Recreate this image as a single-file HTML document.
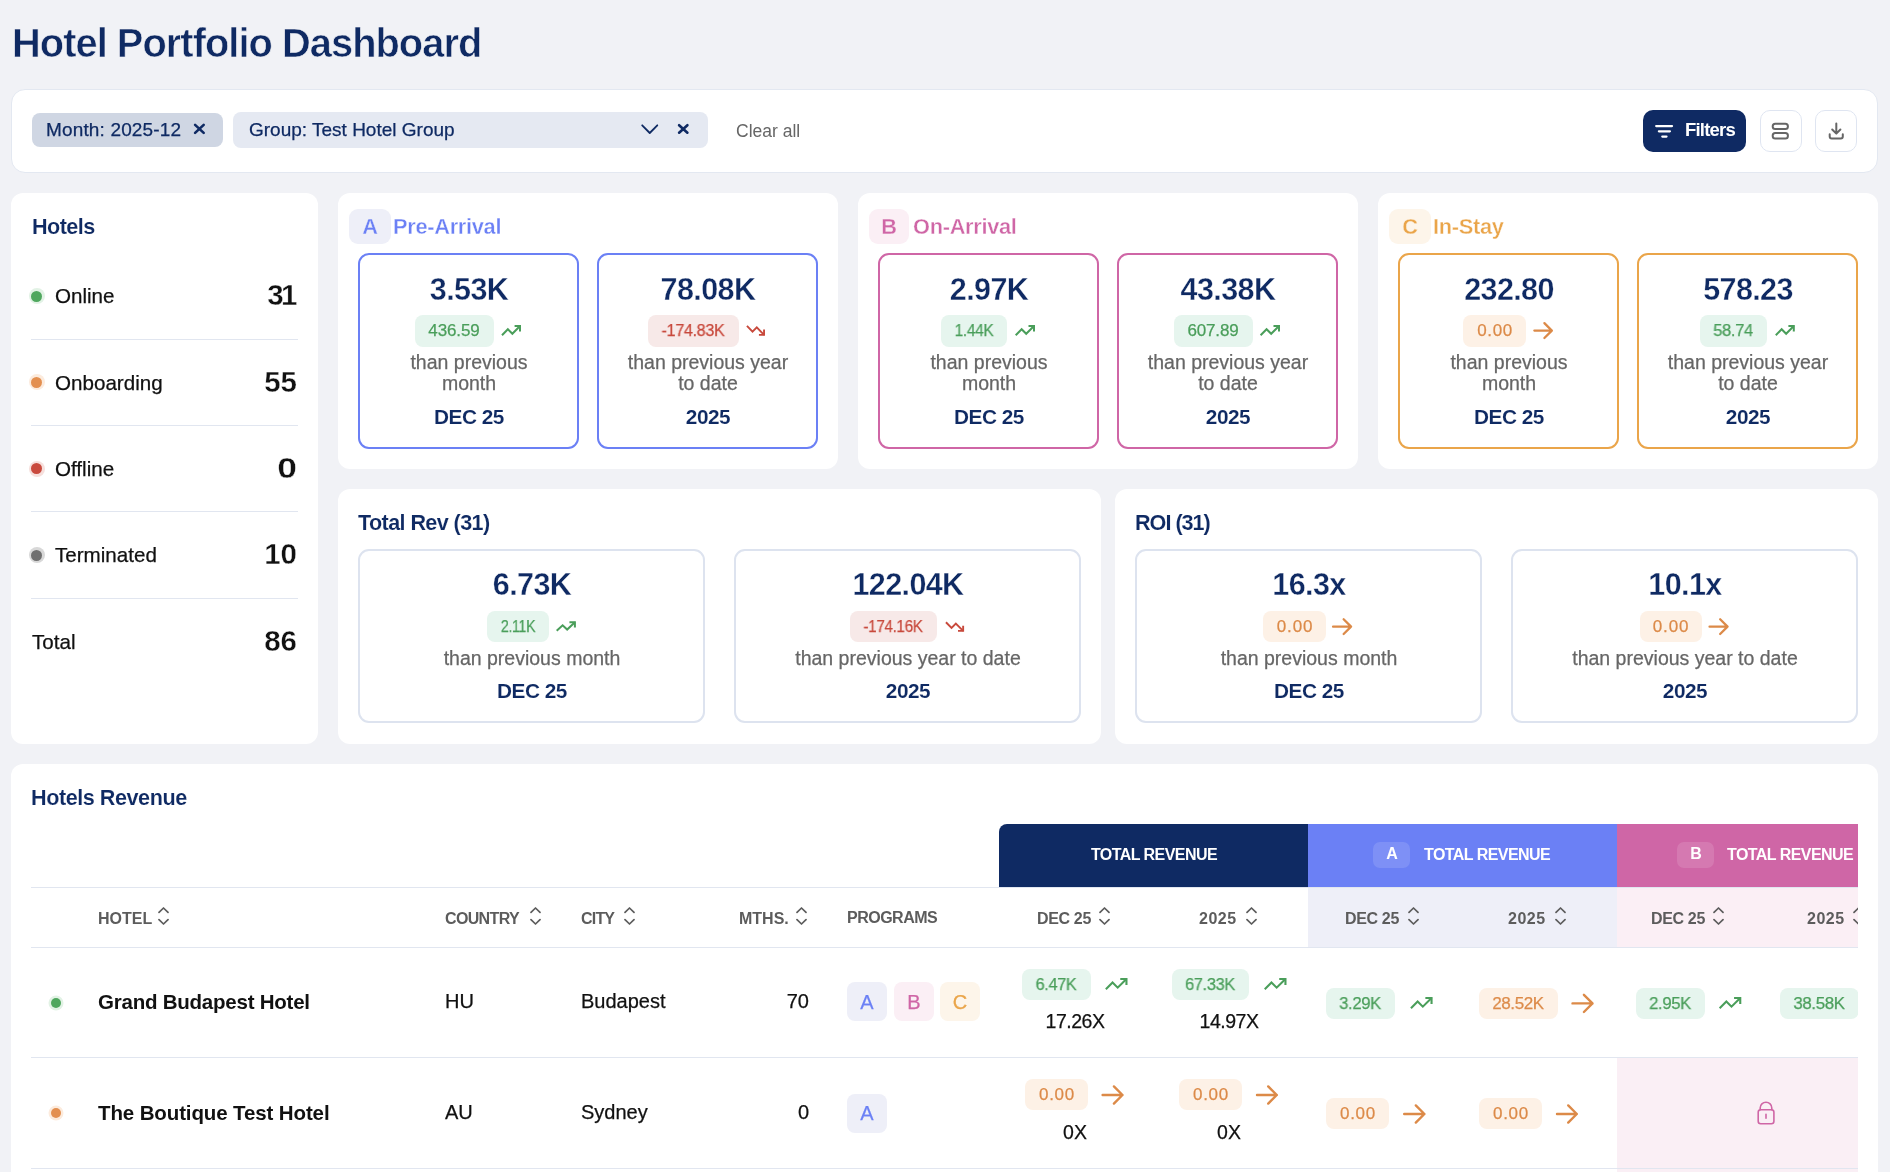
<!DOCTYPE html>
<html><head><meta charset="utf-8"><style>
html,body{margin:0;padding:0;}
body{width:1890px;height:1172px;overflow:hidden;background:#f1f2f6;font-family:"Liberation Sans", sans-serif;position:relative;}
.a{position:absolute;box-sizing:border-box;}
.t{white-space:nowrap;will-change:transform;}
</style></head><body>
<div class="a t" style="top:23.61px;font-size:39.8px;line-height:39.8px;color:#0f2a63;font-weight:700;letter-spacing:-0.95px;left:11.6px;-webkit-text-stroke:0.6px #f1f2f6;">Hotel Portfolio Dashboard</div>
<div class="a" style="left:11px;top:89px;width:1867px;height:84px;background:#fff;border:1px solid #e3e8f1;border-radius:14px;"></div>
<div class="a" style="left:32px;top:113px;width:191px;height:34px;background:#cfd6e3;border-radius:8px;"></div>
<div class="a t" style="top:119.52px;font-size:19px;line-height:19px;color:#0f2a63;-webkit-text-stroke:0.25px #0f2a63;letter-spacing:0.15px;left:46px;">Month: 2025-12</div>
<div class="a" style="left:233px;top:112px;width:475px;height:36px;background:#e5e9f2;border-radius:8px;"></div>
<div class="a t" style="top:119.52px;font-size:19px;line-height:19px;color:#0f2a63;-webkit-text-stroke:0.25px #0f2a63;left:248.5px;">Group: Test Hotel Group</div>
<svg class="a" style="left:0;top:0" width="1890" height="1172" fill="none"><path d="M195.1 124.9L203.7 132.9M203.7 124.9L195.1 132.9" stroke="#0f2a63" stroke-width="2.6" stroke-linecap="round"/><path d="M679.1 125.2L687.4 132.7M687.4 125.2L679.1 132.7" stroke="#0f2a63" stroke-width="2.6" stroke-linecap="round"/><path d="M642.2 125.3L649.75 133L657.3 125.3" stroke="#0f2a63" stroke-width="1.8" stroke-linecap="round" stroke-linejoin="round"/></svg>
<div class="a t" style="top:123.19px;font-size:17.5px;line-height:17.5px;color:#666;-webkit-text-stroke:0.25px #666;left:736.3px;-webkit-text-stroke:0;">Clear all</div>
<div class="a" style="left:1643px;top:110px;width:103px;height:42px;background:#0f2a63;border-radius:10px;"></div>
<svg class="a" style="left:0;top:0" width="1890" height="1172" fill="none"><path d="M1656.2 126.1H1672M1658.9 131.3H1669.9M1662.3 136.6H1666.5" stroke="#fff" stroke-width="2.3" stroke-linecap="round"/><rect x="1772.7" y="123.8" width="15.2" height="5.1" rx="2.5" stroke="#666" stroke-width="2"/><rect x="1772.7" y="133.1" width="15.2" height="5.5" rx="2.5" stroke="#666" stroke-width="2"/><path d="M1836.3 123.6V133.6M1832.2 129.5L1836.3 133.6L1840.4 129.5M1829.7 134.2V136.6A2 2 0 0 0 1831.7 138.6H1840.8A2 2 0 0 0 1842.8 136.6V134.2" stroke="#666" stroke-width="2" stroke-linecap="round" stroke-linejoin="round"/></svg>
<div class="a t" style="top:121.34px;font-size:18.5px;line-height:18.5px;color:#fff;font-weight:700;letter-spacing:-0.8px;left:1684.8px;">Filters</div>
<div class="a" style="left:1760px;top:110px;width:42px;height:42px;border:1px solid #dfe5f1;border-radius:10px;"></div>
<div class="a" style="left:1815px;top:110px;width:42px;height:42px;border:1px solid #dfe5f1;border-radius:10px;"></div>
<div class="a" style="left:11px;top:193px;width:307px;height:551px;background:#fff;border-radius:12px;"></div>
<div class="a t" style="top:215.92px;font-size:21.6px;line-height:21.6px;color:#0f2a63;font-weight:700;letter-spacing:-0.55px;left:32px;-webkit-text-stroke:0.12px #fff;">Hotels</div>
<div class="a" style="left:28.5px;top:288.09999999999997px;width:16.0px;height:16.0px;background:#e2f2e5;border-radius:50%;"></div>
<div class="a" style="left:31px;top:290.59999999999997px;width:11px;height:11.0px;background:#4fa75e;border-radius:50%;"></div>
<div class="a t" style="top:286.16px;font-size:20.6px;line-height:20.6px;color:#111;-webkit-text-stroke:0.25px #111;left:55.2px;">Online</div>
<div class="a t" style="top:280.33px;font-size:29.5px;line-height:29.5px;color:#111;font-weight:700;letter-spacing:-2.5px;left:-505.5px;width:800px;text-align:right;-webkit-text-stroke:0.35px #fff;">31</div>
<div class="a" style="left:31px;top:338.7px;width:267px;height:1.0px;background:#e1e6f0;"></div>
<div class="a" style="left:28.5px;top:374.44999999999993px;width:16.0px;height:16.0px;background:#fcebdd;border-radius:50%;"></div>
<div class="a" style="left:31px;top:376.94999999999993px;width:11px;height:11.0px;background:#e38f50;border-radius:50%;"></div>
<div class="a t" style="top:372.51px;font-size:20.6px;line-height:20.6px;color:#111;-webkit-text-stroke:0.25px #111;left:55.2px;">Onboarding</div>
<div class="a t" style="top:366.68px;font-size:29.5px;line-height:29.5px;color:#111;font-weight:700;left:-503px;width:800px;text-align:right;-webkit-text-stroke:0.35px #fff;">55</div>
<div class="a" style="left:31px;top:425.04999999999995px;width:267px;height:1.0px;background:#e1e6f0;"></div>
<div class="a" style="left:28.5px;top:460.79999999999995px;width:16.0px;height:16.0px;background:#f6dfdc;border-radius:50%;"></div>
<div class="a" style="left:31px;top:463.29999999999995px;width:11px;height:11.0px;background:#c94a3e;border-radius:50%;"></div>
<div class="a t" style="top:458.86px;font-size:20.6px;line-height:20.6px;color:#111;-webkit-text-stroke:0.25px #111;left:55.2px;">Offline</div>
<div class="a t" style="top:453.03px;font-size:29.5px;line-height:29.5px;color:#111;font-weight:700;left:-503px;width:800px;text-align:right;-webkit-text-stroke:0.35px #fff;transform:scaleX(1.2);transform-origin:100% 50%;">0</div>
<div class="a" style="left:31px;top:511.4px;width:267px;height:1.0px;background:#e1e6f0;"></div>
<div class="a" style="left:28.5px;top:547.15px;width:16.0px;height:16.0px;background:#d8d8d8;border-radius:50%;"></div>
<div class="a" style="left:31px;top:549.65px;width:11px;height:11.0px;background:#6f6f6f;border-radius:50%;"></div>
<div class="a t" style="top:545.21px;font-size:20.6px;line-height:20.6px;color:#111;-webkit-text-stroke:0.25px #111;left:55.2px;">Terminated</div>
<div class="a t" style="top:539.38px;font-size:29.5px;line-height:29.5px;color:#111;font-weight:700;left:-503px;width:800px;text-align:right;-webkit-text-stroke:0.35px #fff;">10</div>
<div class="a" style="left:31px;top:597.75px;width:267px;height:1.0px;background:#e1e6f0;"></div>
<div class="a t" style="top:631.56px;font-size:20.6px;line-height:20.6px;color:#111;-webkit-text-stroke:0.25px #111;left:31.5px;">Total</div>
<div class="a t" style="top:625.73px;font-size:29.5px;line-height:29.5px;color:#111;font-weight:700;left:-503px;width:800px;text-align:right;-webkit-text-stroke:0.35px #fff;">86</div>
<div class="a" style="left:338px;top:193px;width:500px;height:276px;background:#fff;border-radius:12px;"></div>
<div class="a" style="left:349px;top:209px;width:42px;height:35px;background:#eeeff8;border-radius:9px;"></div>
<div class="a t" style="top:215.55px;font-size:21.8px;line-height:21.8px;color:#6b80f5;font-weight:700;left:-30.0px;width:800px;text-align:center;-webkit-text-stroke:0.35px #eeeff8;">A</div>
<div class="a t" style="top:215.55px;font-size:21.8px;line-height:21.8px;color:#6b80f5;font-weight:700;letter-spacing:-0.3px;left:393px;-webkit-text-stroke:0.35px #fff;">Pre-Arrival</div>
<div class="a" style="left:358px;top:253px;width:221px;height:196px;background:#fff;border:2px solid #6b80f5;border-radius:11px;"></div>
<div class="a t" style="top:273.88px;font-size:30.5px;line-height:30.5px;color:#0f2a63;font-weight:700;letter-spacing:-0.6px;left:68.80000000000001px;width:800px;text-align:center;-webkit-text-stroke:0.35px #fff;">3.53K</div>
<div class="a" style="left:415px;top:315px;width:79px;height:32px;background:#e6f5ee;border-radius:8px;"></div>
<div class="a t" style="top:322.46px;font-size:17px;line-height:17px;color:#4a9e5a;-webkit-text-stroke:0.25px #4a9e5a;letter-spacing:-0.117px;left:54.441562499999975px;width:800px;text-align:center;">436.59</div>
<svg class="a" style="left:0;top:0" width="1890" height="1172" fill="none"><polyline points="520.00,326.00 512.35,333.82 507.85,329.22 502.00,335.20" stroke="#4a9e5a" stroke-width="2.0" stroke-linecap="butt" stroke-linejoin="miter"/><polyline points="514.60,326.00 520.00,326.00 520.00,331.52" stroke="#4a9e5a" stroke-width="2.0" stroke-linecap="butt" stroke-linejoin="miter"/></svg>
<div class="a t" style="top:352.29px;font-size:19.5px;line-height:19.5px;color:#666666;-webkit-text-stroke:0.25px #666666;left:68.5px;width:800px;text-align:center;line-height:20.6px;">than previous<br>month</div>
<div class="a t" style="top:407.39px;font-size:20.8px;line-height:20.8px;color:#0f2a63;font-weight:700;letter-spacing:-0.5px;left:68.75px;width:800px;text-align:center;-webkit-text-stroke:0.12px #fff;">DEC 25</div>
<div class="a" style="left:597px;top:253px;width:221px;height:196px;background:#fff;border:2px solid #6b80f5;border-radius:11px;"></div>
<div class="a t" style="top:273.88px;font-size:30.5px;line-height:30.5px;color:#0f2a63;font-weight:700;letter-spacing:-0.6px;left:307.79999999999995px;width:800px;text-align:center;-webkit-text-stroke:0.35px #fff;">78.08K</div>
<div class="a" style="left:648px;top:315px;width:91px;height:32px;background:#f7e9e8;border-radius:8px;"></div>
<div class="a t" style="top:322.46px;font-size:17px;line-height:17px;color:#c8493c;-webkit-text-stroke:0.25px #c8493c;letter-spacing:-0.4px;left:293.29999999999995px;width:800px;text-align:center;transform:scaleX(0.953);transform-origin:50% 50%;">-174.83K</div>
<svg class="a" style="left:0;top:0" width="1890" height="1172" fill="none"><polyline points="764.05,334.85 756.78,327.28 752.51,331.74 746.95,325.95" stroke="#c8493c" stroke-width="1.9" stroke-linecap="butt" stroke-linejoin="miter"/><polyline points="758.92,334.85 764.05,334.85 764.05,329.51" stroke="#c8493c" stroke-width="1.9" stroke-linecap="butt" stroke-linejoin="miter"/></svg>
<div class="a t" style="top:352.29px;font-size:19.5px;line-height:19.5px;color:#666666;-webkit-text-stroke:0.25px #666666;left:307.5px;width:800px;text-align:center;line-height:20.6px;">than previous year<br>to date</div>
<div class="a t" style="top:407.39px;font-size:20.8px;line-height:20.8px;color:#0f2a63;font-weight:700;letter-spacing:-0.5px;left:307.75px;width:800px;text-align:center;-webkit-text-stroke:0.12px #fff;">2025</div>
<div class="a" style="left:858px;top:193px;width:500px;height:276px;background:#fff;border-radius:12px;"></div>
<div class="a" style="left:869px;top:209px;width:40px;height:35px;background:#fbeff5;border-radius:9px;"></div>
<div class="a t" style="top:215.55px;font-size:21.8px;line-height:21.8px;color:#cf66a6;font-weight:700;left:489.0px;width:800px;text-align:center;-webkit-text-stroke:0.35px #fbeff5;">B</div>
<div class="a t" style="top:215.55px;font-size:21.8px;line-height:21.8px;color:#cf66a6;font-weight:700;letter-spacing:-0.3px;left:913px;-webkit-text-stroke:0.35px #fff;">On-Arrival</div>
<div class="a" style="left:878px;top:253px;width:221px;height:196px;background:#fff;border:2px solid #cf66a6;border-radius:11px;"></div>
<div class="a t" style="top:273.88px;font-size:30.5px;line-height:30.5px;color:#0f2a63;font-weight:700;letter-spacing:-0.6px;left:588.8px;width:800px;text-align:center;-webkit-text-stroke:0.35px #fff;">2.97K</div>
<div class="a" style="left:941px;top:315px;width:66px;height:32px;background:#e6f5ee;border-radius:8px;"></div>
<div class="a t" style="top:322.46px;font-size:17px;line-height:17px;color:#4a9e5a;-webkit-text-stroke:0.25px #4a9e5a;letter-spacing:-0.4px;left:573.8px;width:800px;text-align:center;transform:scaleX(0.915);transform-origin:50% 50%;">1.44K</div>
<svg class="a" style="left:0;top:0" width="1890" height="1172" fill="none"><polyline points="1034.00,326.00 1026.22,333.82 1021.65,329.22 1015.70,335.20" stroke="#4a9e5a" stroke-width="2.0" stroke-linecap="butt" stroke-linejoin="miter"/><polyline points="1028.51,326.00 1034.00,326.00 1034.00,331.52" stroke="#4a9e5a" stroke-width="2.0" stroke-linecap="butt" stroke-linejoin="miter"/></svg>
<div class="a t" style="top:352.29px;font-size:19.5px;line-height:19.5px;color:#666666;-webkit-text-stroke:0.25px #666666;left:588.5px;width:800px;text-align:center;line-height:20.6px;">than previous<br>month</div>
<div class="a t" style="top:407.39px;font-size:20.8px;line-height:20.8px;color:#0f2a63;font-weight:700;letter-spacing:-0.5px;left:588.75px;width:800px;text-align:center;-webkit-text-stroke:0.12px #fff;">DEC 25</div>
<div class="a" style="left:1117px;top:253px;width:221px;height:196px;background:#fff;border:2px solid #cf66a6;border-radius:11px;"></div>
<div class="a t" style="top:273.88px;font-size:30.5px;line-height:30.5px;color:#0f2a63;font-weight:700;letter-spacing:-0.6px;left:827.8px;width:800px;text-align:center;-webkit-text-stroke:0.35px #fff;">43.38K</div>
<div class="a" style="left:1174px;top:315px;width:79px;height:32px;background:#e6f5ee;border-radius:8px;"></div>
<div class="a t" style="top:322.46px;font-size:17px;line-height:17px;color:#4a9e5a;-webkit-text-stroke:0.25px #4a9e5a;letter-spacing:-0.197px;left:813.4015625px;width:800px;text-align:center;">607.89</div>
<svg class="a" style="left:0;top:0" width="1890" height="1172" fill="none"><polyline points="1279.00,326.00 1271.18,333.82 1266.58,329.22 1260.60,335.20" stroke="#4a9e5a" stroke-width="2.0" stroke-linecap="butt" stroke-linejoin="miter"/><polyline points="1273.48,326.00 1279.00,326.00 1279.00,331.52" stroke="#4a9e5a" stroke-width="2.0" stroke-linecap="butt" stroke-linejoin="miter"/></svg>
<div class="a t" style="top:352.29px;font-size:19.5px;line-height:19.5px;color:#666666;-webkit-text-stroke:0.25px #666666;left:827.5px;width:800px;text-align:center;line-height:20.6px;">than previous year<br>to date</div>
<div class="a t" style="top:407.39px;font-size:20.8px;line-height:20.8px;color:#0f2a63;font-weight:700;letter-spacing:-0.5px;left:827.75px;width:800px;text-align:center;-webkit-text-stroke:0.12px #fff;">2025</div>
<div class="a" style="left:1378px;top:193px;width:500px;height:276px;background:#fff;border-radius:12px;"></div>
<div class="a" style="left:1389px;top:209px;width:42px;height:35px;background:#fdf5ea;border-radius:9px;"></div>
<div class="a t" style="top:215.55px;font-size:21.8px;line-height:21.8px;color:#eaa54a;font-weight:700;left:1010.0px;width:800px;text-align:center;-webkit-text-stroke:0.35px #fdf5ea;">C</div>
<div class="a t" style="top:215.55px;font-size:21.8px;line-height:21.8px;color:#eaa54a;font-weight:700;letter-spacing:-0.3px;left:1433px;-webkit-text-stroke:0.35px #fff;">In-Stay</div>
<div class="a" style="left:1398px;top:253px;width:221px;height:196px;background:#fff;border:2px solid #eaa54a;border-radius:11px;"></div>
<div class="a t" style="top:273.88px;font-size:30.5px;line-height:30.5px;color:#0f2a63;font-weight:700;letter-spacing:-0.6px;left:1108.8px;width:800px;text-align:center;-webkit-text-stroke:0.35px #fff;">232.80</div>
<div class="a" style="left:1463px;top:315px;width:63px;height:32px;background:#fdf1e6;border-radius:8px;"></div>
<div class="a t" style="top:322.46px;font-size:17px;line-height:17px;color:#dc8a48;-webkit-text-stroke:0.25px #dc8a48;letter-spacing:0.641px;left:1094.8203125px;width:800px;text-align:center;">0.00</div>
<svg class="a" style="left:0;top:0" width="1890" height="1172" fill="none"><path d="M1534.35 330.60H1551.85M1544.40 323.15L1551.85 330.60L1544.40 338.05" stroke="#dc8a48" stroke-width="2.3" stroke-linecap="round" stroke-linejoin="round"/></svg>
<div class="a t" style="top:352.29px;font-size:19.5px;line-height:19.5px;color:#666666;-webkit-text-stroke:0.25px #666666;left:1108.5px;width:800px;text-align:center;line-height:20.6px;">than previous<br>month</div>
<div class="a t" style="top:407.39px;font-size:20.8px;line-height:20.8px;color:#0f2a63;font-weight:700;letter-spacing:-0.5px;left:1108.75px;width:800px;text-align:center;-webkit-text-stroke:0.12px #fff;">DEC 25</div>
<div class="a" style="left:1637px;top:253px;width:221px;height:196px;background:#fff;border:2px solid #eaa54a;border-radius:11px;"></div>
<div class="a t" style="top:273.88px;font-size:30.5px;line-height:30.5px;color:#0f2a63;font-weight:700;letter-spacing:-0.6px;left:1347.8px;width:800px;text-align:center;-webkit-text-stroke:0.35px #fff;">578.23</div>
<div class="a" style="left:1700px;top:315px;width:67px;height:32px;background:#e6f5ee;border-radius:8px;"></div>
<div class="a t" style="top:322.46px;font-size:17px;line-height:17px;color:#4a9e5a;-webkit-text-stroke:0.25px #4a9e5a;letter-spacing:-0.4px;left:1333.3px;width:800px;text-align:center;transform:scaleX(0.975);transform-origin:50% 50%;">58.74</div>
<svg class="a" style="left:0;top:0" width="1890" height="1172" fill="none"><polyline points="1793.80,326.00 1786.15,333.82 1781.65,329.22 1775.80,335.20" stroke="#4a9e5a" stroke-width="2.0" stroke-linecap="butt" stroke-linejoin="miter"/><polyline points="1788.40,326.00 1793.80,326.00 1793.80,331.52" stroke="#4a9e5a" stroke-width="2.0" stroke-linecap="butt" stroke-linejoin="miter"/></svg>
<div class="a t" style="top:352.29px;font-size:19.5px;line-height:19.5px;color:#666666;-webkit-text-stroke:0.25px #666666;left:1347.5px;width:800px;text-align:center;line-height:20.6px;">than previous year<br>to date</div>
<div class="a t" style="top:407.39px;font-size:20.8px;line-height:20.8px;color:#0f2a63;font-weight:700;letter-spacing:-0.5px;left:1347.75px;width:800px;text-align:center;-webkit-text-stroke:0.12px #fff;">2025</div>
<div class="a" style="left:338px;top:489px;width:763px;height:255px;background:#fff;border-radius:12px;"></div>
<div class="a t" style="top:511.72px;font-size:21.6px;line-height:21.6px;color:#0f2a63;font-weight:700;letter-spacing:-0.6px;left:357.5px;-webkit-text-stroke:0.12px #fff;">Total Rev (31)</div>
<div class="a" style="left:358px;top:549px;width:347px;height:174px;background:#fff;border:2px solid #dde3ef;border-radius:11px;"></div>
<div class="a t" style="top:568.88px;font-size:30.5px;line-height:30.5px;color:#0f2a63;font-weight:700;letter-spacing:-0.6px;left:131.79999999999995px;width:800px;text-align:center;-webkit-text-stroke:0.35px #fff;">6.73K</div>
<div class="a" style="left:487px;top:611px;width:62px;height:31px;background:#e6f5ee;border-radius:8px;"></div>
<div class="a t" style="top:617.96px;font-size:17px;line-height:17px;color:#4a9e5a;-webkit-text-stroke:0.25px #4a9e5a;letter-spacing:-0.4px;left:117.79999999999995px;width:800px;text-align:center;transform:scaleX(0.833);transform-origin:50% 50%;">2.11K</div>
<svg class="a" style="left:0;top:0" width="1890" height="1172" fill="none"><polyline points="574.90,622.30 567.17,629.52 562.62,625.27 556.70,630.80" stroke="#4a9e5a" stroke-width="2.0" stroke-linecap="butt" stroke-linejoin="miter"/><polyline points="569.44,622.30 574.90,622.30 574.90,627.40" stroke="#4a9e5a" stroke-width="2.0" stroke-linecap="butt" stroke-linejoin="miter"/></svg>
<div class="a t" style="top:649.19px;font-size:19.5px;line-height:19.5px;color:#666666;-webkit-text-stroke:0.25px #666666;left:131.5px;width:800px;text-align:center;">than previous month</div>
<div class="a t" style="top:681.09px;font-size:20.8px;line-height:20.8px;color:#0f2a63;font-weight:700;letter-spacing:-0.5px;left:131.75px;width:800px;text-align:center;-webkit-text-stroke:0.12px #fff;">DEC 25</div>
<div class="a" style="left:734px;top:549px;width:347px;height:174px;background:#fff;border:2px solid #dde3ef;border-radius:11px;"></div>
<div class="a t" style="top:568.88px;font-size:30.5px;line-height:30.5px;color:#0f2a63;font-weight:700;letter-spacing:-0.6px;left:507.79999999999995px;width:800px;text-align:center;-webkit-text-stroke:0.35px #fff;">122.04K</div>
<div class="a" style="left:850px;top:611px;width:87px;height:31px;background:#f7e9e8;border-radius:8px;"></div>
<div class="a t" style="top:617.96px;font-size:17px;line-height:17px;color:#c8493c;-webkit-text-stroke:0.25px #c8493c;letter-spacing:-0.4px;left:493.29999999999995px;width:800px;text-align:center;transform:scaleX(0.897);transform-origin:50% 50%;">-174.16K</div>
<svg class="a" style="left:0;top:0" width="1890" height="1172" fill="none"><polyline points="963.15,630.85 955.84,623.54 951.54,627.84 945.95,622.25" stroke="#c8493c" stroke-width="1.9" stroke-linecap="butt" stroke-linejoin="miter"/><polyline points="957.99,630.85 963.15,630.85 963.15,625.69" stroke="#c8493c" stroke-width="1.9" stroke-linecap="butt" stroke-linejoin="miter"/></svg>
<div class="a t" style="top:649.19px;font-size:19.5px;line-height:19.5px;color:#666666;-webkit-text-stroke:0.25px #666666;left:507.5px;width:800px;text-align:center;">than previous year to date</div>
<div class="a t" style="top:681.09px;font-size:20.8px;line-height:20.8px;color:#0f2a63;font-weight:700;letter-spacing:-0.5px;left:507.75px;width:800px;text-align:center;-webkit-text-stroke:0.12px #fff;">2025</div>
<div class="a" style="left:1115px;top:489px;width:763px;height:255px;background:#fff;border-radius:12px;"></div>
<div class="a t" style="top:511.72px;font-size:21.6px;line-height:21.6px;color:#0f2a63;font-weight:700;letter-spacing:-1.0px;left:1134.5px;-webkit-text-stroke:0.12px #fff;">ROI (31)</div>
<div class="a" style="left:1135px;top:549px;width:347px;height:174px;background:#fff;border:2px solid #dde3ef;border-radius:11px;"></div>
<div class="a t" style="top:568.88px;font-size:30.5px;line-height:30.5px;color:#0f2a63;font-weight:700;letter-spacing:-0.6px;left:908.8px;width:800px;text-align:center;-webkit-text-stroke:0.35px #fff;">16.3x</div>
<div class="a" style="left:1263px;top:611px;width:63px;height:31px;background:#fdf1e6;border-radius:8px;"></div>
<div class="a t" style="top:617.96px;font-size:17px;line-height:17px;color:#dc8a48;-webkit-text-stroke:0.25px #dc8a48;letter-spacing:0.841px;left:894.9203124999999px;width:800px;text-align:center;">0.00</div>
<svg class="a" style="left:0;top:0" width="1890" height="1172" fill="none"><path d="M1333.05 626.65H1351.05M1343.65 619.25L1351.05 626.65L1343.65 634.05" stroke="#dc8a48" stroke-width="2.3" stroke-linecap="round" stroke-linejoin="round"/></svg>
<div class="a t" style="top:649.19px;font-size:19.5px;line-height:19.5px;color:#666666;-webkit-text-stroke:0.25px #666666;left:908.5px;width:800px;text-align:center;">than previous month</div>
<div class="a t" style="top:681.09px;font-size:20.8px;line-height:20.8px;color:#0f2a63;font-weight:700;letter-spacing:-0.5px;left:908.75px;width:800px;text-align:center;-webkit-text-stroke:0.12px #fff;">DEC 25</div>
<div class="a" style="left:1511px;top:549px;width:347px;height:174px;background:#fff;border:2px solid #dde3ef;border-radius:11px;"></div>
<div class="a t" style="top:568.88px;font-size:30.5px;line-height:30.5px;color:#0f2a63;font-weight:700;letter-spacing:-0.6px;left:1284.8px;width:800px;text-align:center;-webkit-text-stroke:0.35px #fff;">10.1x</div>
<div class="a" style="left:1639.5px;top:611px;width:62.5px;height:31px;background:#fdf1e6;border-radius:8px;"></div>
<div class="a t" style="top:617.96px;font-size:17px;line-height:17px;color:#dc8a48;-webkit-text-stroke:0.25px #dc8a48;letter-spacing:0.841px;left:1271.1703125px;width:800px;text-align:center;">0.00</div>
<svg class="a" style="left:0;top:0" width="1890" height="1172" fill="none"><path d="M1709.55 626.65H1727.55M1720.15 619.25L1727.55 626.65L1720.15 634.05" stroke="#dc8a48" stroke-width="2.3" stroke-linecap="round" stroke-linejoin="round"/></svg>
<div class="a t" style="top:649.19px;font-size:19.5px;line-height:19.5px;color:#666666;-webkit-text-stroke:0.25px #666666;left:1284.5px;width:800px;text-align:center;">than previous year to date</div>
<div class="a t" style="top:681.09px;font-size:20.8px;line-height:20.8px;color:#0f2a63;font-weight:700;letter-spacing:-0.5px;left:1284.75px;width:800px;text-align:center;-webkit-text-stroke:0.12px #fff;">2025</div>
<div class="a" style="left:11px;top:764px;width:1867px;height:436px;background:#fff;border-radius:12px;"></div>
<div class="a t" style="top:787.32px;font-size:21.6px;line-height:21.6px;color:#0f2a63;font-weight:700;letter-spacing:-0.45px;left:30.8px;-webkit-text-stroke:0.12px #fff;">Hotels Revenue</div>
<div class="a" style="left:0;top:0;width:1858px;height:1172px;overflow:hidden">
<div class="a" style="left:31px;top:887px;width:1827px;height:1px;background:#e1e6f0;"></div>
<div class="a" style="left:999px;top:824px;width:309px;height:63px;background:#0f2a63;border-radius:8px 0 0 0;"></div>
<div class="a t" style="top:846.96px;font-size:16px;line-height:16px;color:#fff;font-weight:700;letter-spacing:-0.55px;left:753.77px;width:800px;text-align:center;">TOTAL REVENUE</div>
<div class="a" style="left:1308px;top:824px;width:309px;height:63px;background:#6b80f5;"></div>
<div class="a" style="left:1373px;top:842px;width:37px;height:26px;background:rgba(255,255,255,0.13);border-radius:7px;"></div>
<div class="a t" style="top:846.46px;font-size:16px;line-height:16px;color:#fff;font-weight:700;left:991.5px;width:800px;text-align:center;">A</div>
<div class="a t" style="top:846.96px;font-size:16px;line-height:16px;color:#fff;font-weight:700;letter-spacing:-0.55px;left:1424px;">TOTAL REVENUE</div>
<div class="a" style="left:1617px;top:824px;width:283px;height:63px;background:#cf66a6;"></div>
<div class="a" style="left:1677px;top:842px;width:37px;height:26px;background:rgba(255,255,255,0.13);border-radius:7px;"></div>
<div class="a t" style="top:846.46px;font-size:16px;line-height:16px;color:#fff;font-weight:700;left:1295.5px;width:800px;text-align:center;">B</div>
<div class="a t" style="top:846.96px;font-size:16px;line-height:16px;color:#fff;font-weight:700;letter-spacing:-0.55px;left:1727.4px;">TOTAL REVENUE</div>
<div class="a" style="left:1308px;top:888px;width:309px;height:59px;background:#eeeff8;"></div>
<div class="a" style="left:1617px;top:888px;width:283px;height:59px;background:#fbeff5;"></div>
<div class="a" style="left:31px;top:947px;width:1869px;height:1px;background:#e1e6f0;"></div>
<div class="a t" style="top:911.26px;font-size:16px;line-height:16px;color:#5c5c5c;font-weight:700;left:98.4px;">HOTEL</div>
<svg class="a" style="left:158px;top:907px;" width="11" height="18" viewBox="0 0 11 18" fill="none"><path d="M1 5.3L5.5 1L10 5.3M1 12.7L5.5 17L10 12.7" stroke="#5c5c5c" stroke-width="1.7" stroke-linecap="round" stroke-linejoin="round"/></svg>
<div class="a t" style="top:911.26px;font-size:16px;line-height:16px;color:#5c5c5c;font-weight:700;letter-spacing:-0.65px;left:445.2px;">COUNTRY</div>
<svg class="a" style="left:529.5px;top:907px;" width="11" height="18" viewBox="0 0 11 18" fill="none"><path d="M1 5.3L5.5 1L10 5.3M1 12.7L5.5 17L10 12.7" stroke="#5c5c5c" stroke-width="1.7" stroke-linecap="round" stroke-linejoin="round"/></svg>
<div class="a t" style="top:911.26px;font-size:16px;line-height:16px;color:#5c5c5c;font-weight:700;letter-spacing:-0.8px;left:581px;">CITY</div>
<svg class="a" style="left:624px;top:907px;" width="11" height="18" viewBox="0 0 11 18" fill="none"><path d="M1 5.3L5.5 1L10 5.3M1 12.7L5.5 17L10 12.7" stroke="#5c5c5c" stroke-width="1.7" stroke-linecap="round" stroke-linejoin="round"/></svg>
<div class="a t" style="top:911.26px;font-size:16px;line-height:16px;color:#5c5c5c;font-weight:700;left:738.5px;">MTHS.</div>
<svg class="a" style="left:795.5px;top:907px;" width="11" height="18" viewBox="0 0 11 18" fill="none"><path d="M1 5.3L5.5 1L10 5.3M1 12.7L5.5 17L10 12.7" stroke="#5c5c5c" stroke-width="1.7" stroke-linecap="round" stroke-linejoin="round"/></svg>
<div class="a t" style="top:911.26px;font-size:16px;line-height:16px;color:#5c5c5c;font-weight:700;letter-spacing:-0.35px;left:1036.5px;">DEC 25</div>
<svg class="a" style="left:1098.5px;top:907px;" width="11" height="18" viewBox="0 0 11 18" fill="none"><path d="M1 5.3L5.5 1L10 5.3M1 12.7L5.5 17L10 12.7" stroke="#5c5c5c" stroke-width="1.7" stroke-linecap="round" stroke-linejoin="round"/></svg>
<div class="a t" style="top:911.26px;font-size:16px;line-height:16px;color:#5c5c5c;font-weight:700;letter-spacing:0.5px;left:1198.5px;">2025</div>
<svg class="a" style="left:1246px;top:907px;" width="11" height="18" viewBox="0 0 11 18" fill="none"><path d="M1 5.3L5.5 1L10 5.3M1 12.7L5.5 17L10 12.7" stroke="#5c5c5c" stroke-width="1.7" stroke-linecap="round" stroke-linejoin="round"/></svg>
<div class="a t" style="top:911.26px;font-size:16px;line-height:16px;color:#5c5c5c;font-weight:700;letter-spacing:-0.35px;left:1345.4px;">DEC 25</div>
<svg class="a" style="left:1408px;top:907px;" width="11" height="18" viewBox="0 0 11 18" fill="none"><path d="M1 5.3L5.5 1L10 5.3M1 12.7L5.5 17L10 12.7" stroke="#5c5c5c" stroke-width="1.7" stroke-linecap="round" stroke-linejoin="round"/></svg>
<div class="a t" style="top:911.26px;font-size:16px;line-height:16px;color:#5c5c5c;font-weight:700;letter-spacing:0.5px;left:1508px;">2025</div>
<svg class="a" style="left:1555px;top:907px;" width="11" height="18" viewBox="0 0 11 18" fill="none"><path d="M1 5.3L5.5 1L10 5.3M1 12.7L5.5 17L10 12.7" stroke="#5c5c5c" stroke-width="1.7" stroke-linecap="round" stroke-linejoin="round"/></svg>
<div class="a t" style="top:911.26px;font-size:16px;line-height:16px;color:#5c5c5c;font-weight:700;letter-spacing:-0.35px;left:1650.6px;">DEC 25</div>
<svg class="a" style="left:1713px;top:907px;" width="11" height="18" viewBox="0 0 11 18" fill="none"><path d="M1 5.3L5.5 1L10 5.3M1 12.7L5.5 17L10 12.7" stroke="#5c5c5c" stroke-width="1.7" stroke-linecap="round" stroke-linejoin="round"/></svg>
<div class="a t" style="top:911.26px;font-size:16px;line-height:16px;color:#5c5c5c;font-weight:700;letter-spacing:0.5px;left:1806.8px;">2025</div>
<svg class="a" style="left:1853px;top:907px;" width="11" height="18" viewBox="0 0 11 18" fill="none"><path d="M1 5.3L5.5 1L10 5.3M1 12.7L5.5 17L10 12.7" stroke="#5c5c5c" stroke-width="1.7" stroke-linecap="round" stroke-linejoin="round"/></svg>
<div class="a t" style="top:910.26px;font-size:16px;line-height:16px;color:#5c5c5c;font-weight:700;letter-spacing:-0.5px;left:847.4px;">PROGRAMS</div>
<div class="a" style="left:51px;top:998px;width:10px;height:10px;background:#4fa75e;border-radius:50%;box-shadow:0 0 0 2.5px #e2f2e5;"></div>
<div class="a t" style="top:991.95px;font-size:20.5px;line-height:20.5px;color:#111;font-weight:700;letter-spacing:-0.23px;left:98.3px;">Grand Budapest Hotel</div>
<div class="a t" style="top:991.47px;font-size:20px;line-height:20px;color:#111;-webkit-text-stroke:0.25px #111;left:445.2px;">HU</div>
<div class="a t" style="top:991.47px;font-size:20px;line-height:20px;color:#111;-webkit-text-stroke:0.25px #111;left:581px;">Budapest</div>
<div class="a t" style="top:991.47px;font-size:20px;line-height:20px;color:#111;-webkit-text-stroke:0.25px #111;left:9px;width:800px;text-align:right;">70</div>
<div class="a" style="left:847px;top:982px;width:40px;height:39px;background:#eeeff8;border-radius:8px;"></div>
<div class="a t" style="top:991.57px;font-size:20px;line-height:20px;color:#6b80f5;-webkit-text-stroke:0.25px #6b80f5;left:467px;width:800px;text-align:center;">A</div>
<div class="a" style="left:894px;top:982px;width:40px;height:39px;background:#fbeff5;border-radius:8px;"></div>
<div class="a t" style="top:991.57px;font-size:20px;line-height:20px;color:#cf66a6;-webkit-text-stroke:0.25px #cf66a6;left:514px;width:800px;text-align:center;">B</div>
<div class="a" style="left:940px;top:982px;width:40px;height:39px;background:#fdf5ea;border-radius:8px;"></div>
<div class="a t" style="top:991.57px;font-size:20px;line-height:20px;color:#eaa54a;-webkit-text-stroke:0.25px #eaa54a;left:560px;width:800px;text-align:center;">C</div>
<div class="a" style="left:1022px;top:969px;width:69px;height:31px;background:#e6f5ee;border-radius:8px;"></div>
<div class="a t" style="top:975.96px;font-size:17px;line-height:17px;color:#4a9e5a;-webkit-text-stroke:0.25px #4a9e5a;letter-spacing:-0.4px;left:656.3px;width:800px;text-align:center;transform:scaleX(0.960);transform-origin:50% 50%;">6.47K</div>
<svg class="a" style="left:0;top:0" width="1890" height="1172" fill="none"><polyline points="1126.45,979.05 1117.69,987.63 1112.55,982.58 1105.85,989.15" stroke="#4a9e5a" stroke-width="2.1" stroke-linecap="butt" stroke-linejoin="miter"/><polyline points="1120.27,979.05 1126.45,979.05 1126.45,985.11" stroke="#4a9e5a" stroke-width="2.1" stroke-linecap="butt" stroke-linejoin="miter"/></svg>
<div class="a t" style="top:1012.19px;font-size:19.5px;line-height:19.5px;color:#111;-webkit-text-stroke:0.25px #111;letter-spacing:-0.5px;left:674.9000000000001px;width:800px;text-align:center;">17.26X</div>
<div class="a" style="left:1172px;top:969px;width:77px;height:31px;background:#e6f5ee;border-radius:8px;"></div>
<div class="a t" style="top:975.96px;font-size:17px;line-height:17px;color:#4a9e5a;-webkit-text-stroke:0.25px #4a9e5a;letter-spacing:-0.4px;left:810.3px;width:800px;text-align:center;transform:scaleX(0.968);transform-origin:50% 50%;">67.33K</div>
<svg class="a" style="left:0;top:0" width="1890" height="1172" fill="none"><polyline points="1285.45,979.05 1276.65,987.63 1271.48,982.58 1264.75,989.15" stroke="#4a9e5a" stroke-width="2.1" stroke-linecap="butt" stroke-linejoin="miter"/><polyline points="1279.24,979.05 1285.45,979.05 1285.45,985.11" stroke="#4a9e5a" stroke-width="2.1" stroke-linecap="butt" stroke-linejoin="miter"/></svg>
<div class="a t" style="top:1012.19px;font-size:19.5px;line-height:19.5px;color:#111;-webkit-text-stroke:0.25px #111;letter-spacing:-0.5px;left:829.2px;width:800px;text-align:center;">14.97X</div>
<div class="a" style="left:1326px;top:988px;width:69px;height:31px;background:#e6f5ee;border-radius:8px;"></div>
<div class="a t" style="top:994.96px;font-size:17px;line-height:17px;color:#4a9e5a;-webkit-text-stroke:0.25px #4a9e5a;letter-spacing:-0.4px;left:960.3px;width:800px;text-align:center;transform:scaleX(0.981);transform-origin:50% 50%;">3.29K</div>
<svg class="a" style="left:0;top:0" width="1890" height="1172" fill="none"><polyline points="1431.55,998.05 1422.80,1006.63 1417.64,1001.58 1410.95,1008.15" stroke="#4a9e5a" stroke-width="2.1" stroke-linecap="butt" stroke-linejoin="miter"/><polyline points="1425.37,998.05 1431.55,998.05 1431.55,1004.11" stroke="#4a9e5a" stroke-width="2.1" stroke-linecap="butt" stroke-linejoin="miter"/></svg>
<div class="a" style="left:1479px;top:988px;width:79px;height:31px;background:#fdf1e6;border-radius:8px;"></div>
<div class="a t" style="top:994.96px;font-size:17px;line-height:17px;color:#dc8a48;-webkit-text-stroke:0.25px #dc8a48;letter-spacing:-0.4px;left:1118.3px;width:800px;text-align:center;transform:scaleX(0.997);transform-origin:50% 50%;">28.52K</div>
<svg class="a" style="left:0;top:0" width="1890" height="1172" fill="none"><path d="M1572.50 1003.40H1592.50M1583.90 994.80L1592.50 1003.40L1583.90 1012.00" stroke="#dc8a48" stroke-width="2.4" stroke-linecap="round" stroke-linejoin="round"/></svg>
<div class="a" style="left:1636px;top:988px;width:69px;height:31px;background:#e6f5ee;border-radius:8px;"></div>
<div class="a t" style="top:994.96px;font-size:17px;line-height:17px;color:#4a9e5a;-webkit-text-stroke:0.25px #4a9e5a;letter-spacing:-0.4px;left:1270.3px;width:800px;text-align:center;transform:scaleX(0.983);transform-origin:50% 50%;">2.95K</div>
<svg class="a" style="left:0;top:0" width="1890" height="1172" fill="none"><polyline points="1740.25,998.05 1731.49,1006.63 1726.35,1001.58 1719.65,1008.15" stroke="#4a9e5a" stroke-width="2.1" stroke-linecap="butt" stroke-linejoin="miter"/><polyline points="1734.07,998.05 1740.25,998.05 1740.25,1004.11" stroke="#4a9e5a" stroke-width="2.1" stroke-linecap="butt" stroke-linejoin="miter"/></svg>
<div class="a" style="left:1780px;top:988px;width:79px;height:31px;background:#e6f5ee;border-radius:8px;"></div>
<div class="a t" style="top:994.96px;font-size:17px;line-height:17px;color:#4a9e5a;-webkit-text-stroke:0.25px #4a9e5a;letter-spacing:-0.4px;left:1419.3px;width:800px;text-align:center;transform:scaleX(0.995);transform-origin:50% 50%;">38.58K</div>
<svg class="a" style="left:0;top:0" width="1890" height="1172" fill="none"><polyline points="1898.95,998.05 1891.34,1006.63 1886.87,1001.58 1881.05,1008.15" stroke="#4a9e5a" stroke-width="2.1" stroke-linecap="butt" stroke-linejoin="miter"/><polyline points="1893.58,998.05 1898.95,998.05 1898.95,1004.11" stroke="#4a9e5a" stroke-width="2.1" stroke-linecap="butt" stroke-linejoin="miter"/></svg>
<div class="a" style="left:31px;top:1057px;width:1869px;height:1px;background:#e1e6f0;"></div>
<div class="a" style="left:51px;top:1108px;width:10px;height:10px;background:#e38f50;border-radius:50%;box-shadow:0 0 0 2.5px #fcebdd;"></div>
<div class="a t" style="top:1102.65px;font-size:20.5px;line-height:20.5px;color:#111;font-weight:700;letter-spacing:-0.12px;left:98.3px;">The Boutique Test Hotel</div>
<div class="a t" style="top:1102.47px;font-size:20px;line-height:20px;color:#111;-webkit-text-stroke:0.25px #111;left:445.2px;">AU</div>
<div class="a t" style="top:1102.47px;font-size:20px;line-height:20px;color:#111;-webkit-text-stroke:0.25px #111;left:581px;">Sydney</div>
<div class="a t" style="top:1102.47px;font-size:20px;line-height:20px;color:#111;-webkit-text-stroke:0.25px #111;left:9px;width:800px;text-align:right;">0</div>
<div class="a" style="left:847px;top:1093.5px;width:40px;height:39.0px;background:#eeeff8;border-radius:8px;"></div>
<div class="a t" style="top:1103.07px;font-size:20px;line-height:20px;color:#6b80f5;-webkit-text-stroke:0.25px #6b80f5;left:467px;width:800px;text-align:center;">A</div>
<div class="a" style="left:1025px;top:1079px;width:63px;height:31px;background:#fdf1e6;border-radius:8px;"></div>
<div class="a t" style="top:1085.96px;font-size:17px;line-height:17px;color:#dc8a48;-webkit-text-stroke:0.25px #dc8a48;letter-spacing:0.707px;left:656.8536458333333px;width:800px;text-align:center;">0.00</div>
<svg class="a" style="left:0;top:0" width="1890" height="1172" fill="none"><path d="M1102.60 1095.00H1122.50M1113.90 1086.40L1122.50 1095.00L1113.90 1103.60" stroke="#dc8a48" stroke-width="2.4" stroke-linecap="round" stroke-linejoin="round"/></svg>
<div class="a t" style="top:1123.49px;font-size:19.5px;line-height:19.5px;color:#111;-webkit-text-stroke:0.25px #111;left:674.5px;width:800px;text-align:center;">0X</div>
<div class="a" style="left:1179px;top:1079px;width:63px;height:31px;background:#fdf1e6;border-radius:8px;"></div>
<div class="a t" style="top:1085.96px;font-size:17px;line-height:17px;color:#dc8a48;-webkit-text-stroke:0.25px #dc8a48;letter-spacing:0.707px;left:810.8536458333333px;width:800px;text-align:center;">0.00</div>
<svg class="a" style="left:0;top:0" width="1890" height="1172" fill="none"><path d="M1257.00 1095.00H1276.80M1268.20 1086.40L1276.80 1095.00L1268.20 1103.60" stroke="#dc8a48" stroke-width="2.4" stroke-linecap="round" stroke-linejoin="round"/></svg>
<div class="a t" style="top:1123.49px;font-size:19.5px;line-height:19.5px;color:#111;-webkit-text-stroke:0.25px #111;left:829px;width:800px;text-align:center;">0X</div>
<div class="a" style="left:1326px;top:1098.3px;width:63px;height:31.100000000000136px;background:#fdf1e6;border-radius:8px;"></div>
<div class="a t" style="top:1105.31px;font-size:17px;line-height:17px;color:#dc8a48;-webkit-text-stroke:0.25px #dc8a48;letter-spacing:0.707px;left:957.8536458333333px;width:800px;text-align:center;">0.00</div>
<svg class="a" style="left:0;top:0" width="1890" height="1172" fill="none"><path d="M1404.20 1114.00H1424.40M1415.80 1105.40L1424.40 1114.00L1415.80 1122.60" stroke="#dc8a48" stroke-width="2.4" stroke-linecap="round" stroke-linejoin="round"/></svg>
<div class="a" style="left:1479px;top:1098.3px;width:63px;height:31.100000000000136px;background:#fdf1e6;border-radius:8px;"></div>
<div class="a t" style="top:1105.31px;font-size:17px;line-height:17px;color:#dc8a48;-webkit-text-stroke:0.25px #dc8a48;letter-spacing:0.707px;left:1110.8536458333333px;width:800px;text-align:center;">0.00</div>
<svg class="a" style="left:0;top:0" width="1890" height="1172" fill="none"><path d="M1557.00 1114.00H1576.80M1568.20 1105.40L1576.80 1114.00L1568.20 1122.60" stroke="#dc8a48" stroke-width="2.4" stroke-linecap="round" stroke-linejoin="round"/></svg>
<div class="a" style="left:1617px;top:1058px;width:283px;height:114px;background:#faeff5;"></div>
<svg class="a" style="left:1754px;top:1098px;" width="24" height="28" viewBox="0 0 24 28" fill="none"><rect x="4.2" y="11.8" width="15.7" height="14" rx="2.5" stroke="#cf66a6" stroke-width="1.6"/><path d="M6.2 11.8V10A5.8 5.8 0 0 1 17.8 10V11.8M12 16.2V20.3" stroke="#cf66a6" stroke-width="1.6" stroke-linecap="round"/></svg>
<div class="a" style="left:31px;top:1168px;width:1869px;height:1px;background:#e1e6f0;"></div>
</div>
</body></html>
